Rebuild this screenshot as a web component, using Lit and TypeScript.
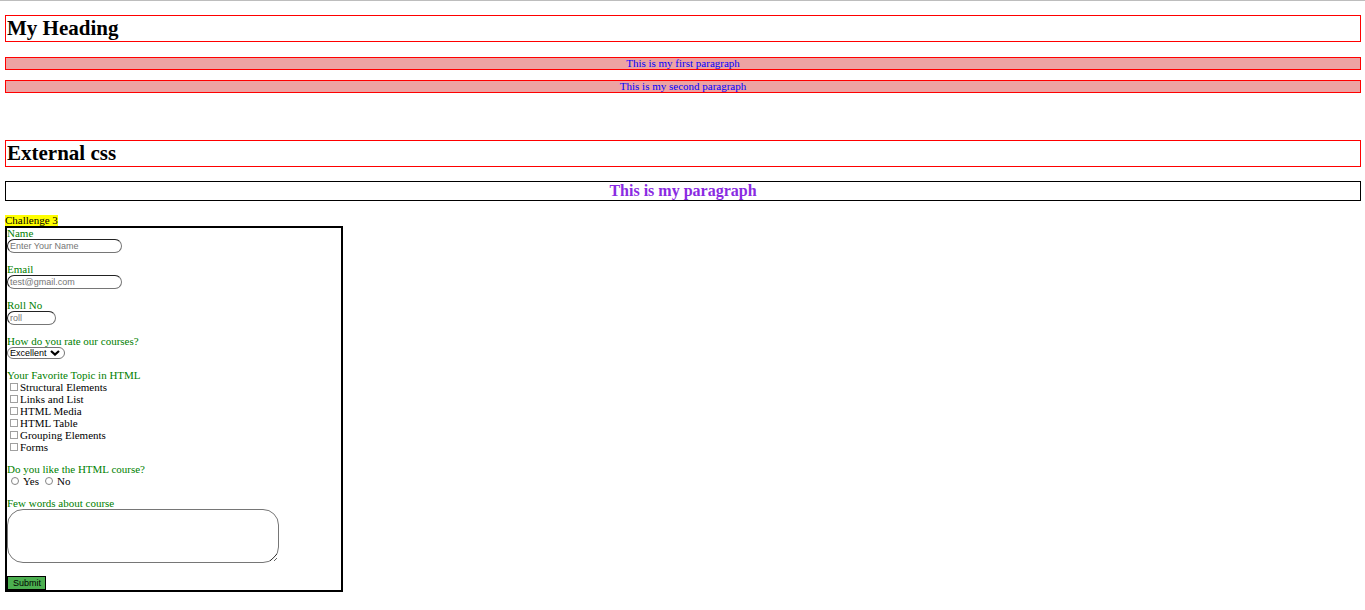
import { LitElement, html, css } from "lit";
import { customElement } from "lit/decorators.js";

const TOPICS = [
  "Structural Elements",
  "Links and List",
  "HTML Media",
  "HTML Table",
  "Grouping Elements",
  "Forms",
];

@customElement("app-root")
export class AppRoot extends LitElement {
  static styles = css`
    :host {
      display: block;
      border-top: 1px solid #bdbdbd;
      background: #fff;
      color: #000;
      font: 11px/12px "Liberation Serif", "Times New Roman", serif;
    }
    main {
      padding: 14px 4px 18px 5px;
    }
    h1 {
      margin: 0;
      padding: 0 1px;
      border: 1px solid #f00;
      font-size: 21px;
      line-height: 25px;
      font-weight: bold;
    }
    .note {
      margin: 10px 0 0;
      border: 1px solid #f00;
      background: #eda3a3;
      color: #00f;
      line-height: 11px;
      text-align: center;
    }
    .first {
      margin-top: 15px;
    }
    .external {
      margin-top: 47px;
    }
    .styled {
      margin: 14px 0;
      border: 1px solid #000;
      color: #8a2be2;
      font-size: 16px;
      line-height: 18px;
      font-weight: bold;
      text-align: center;
    }
    .challenge {
      display: flex;
      line-height: 11px;
    }
    mark {
      background: #ff0;
      color: #000;
    }
    form {
      display: flex;
      flex-direction: column;
      gap: 11px;
      box-sizing: border-box;
      width: 338px;
      max-width: 100%;
      border: 2px solid #000;
    }
    .field {
      display: flex;
      flex-direction: column;
      align-items: flex-start;
      min-width: 0;
      margin: 0;
      padding: 0;
      border: 0;
    }
    .caption {
      padding: 0;
      color: #008000;
      line-height: 11px;
    }
    .text,
    select,
    textarea,
    button {
      box-sizing: border-box;
      margin: 0;
      font: 9px/10px "Liberation Sans", Arial, sans-serif;
    }
    .text {
      width: 115px;
      height: 14px;
      padding: 1px 2px;
      border: 1px solid #767676;
      border-top-color: #222;
      border-left-color: #222;
      border-radius: 7px;
      background: #fff;
    }
    .text::placeholder {
      color: #757575;
    }
    .roll {
      width: 49px;
    }
    .select {
      display: grid;
      align-items: center;
    }
    .select > * {
      grid-area: 1 / 1;
    }
    select {
      appearance: none;
      width: 58px;
      height: 12px;
      padding: 0 2px;
      border: 1px solid #767676;
      border-radius: 6px;
      background: #fff;
      color: #000;
    }
    .chevron {
      justify-self: end;
      width: 10px;
      height: 6px;
      margin-right: 5px;
      pointer-events: none;
    }
    .option {
      display: flex;
      align-items: center;
      height: 12px;
    }
    .option input {
      appearance: none;
      box-sizing: border-box;
      width: 8px;
      height: 8px;
      margin: 0 2px 0 3px;
      border: 1px solid #a0a0a0;
      background: #fff;
    }
    .option input:checked {
      background: #0075ff;
    }
    .choices {
      display: flex;
      gap: 2px;
    }
    .choices .option input {
      margin: 0 4px;
      border-color: #858585;
      border-radius: 50%;
    }
    textarea {
      width: 272px;
      max-width: 100%;
      height: 54px;
      padding: 2px;
      border: 1px solid #767676;
      border-radius: 16px;
      background: #fff;
    }
    button {
      align-self: flex-start;
      height: 14px;
      margin-top: 2px;
      padding: 0 4px 0 5px;
      border: 1px solid #000;
      background: #4caf50;
      color: #000;
    }
  `;

  render() {
    return html`
      <main>
        <h1>My Heading</h1>
        <p class="note first">This is my first paragraph</p>
        <p class="note">This is my second paragraph</p>
        <h1 class="external">External css</h1>
        <p class="styled">This is my paragraph</p>
        <div class="challenge"><mark>Challenge 3</mark></div>
        <form @submit=${(e: Event) => e.preventDefault()}>
          <div class="field">
            <label class="caption" for="name">Name</label>
            <input class="text" id="name" type="text" placeholder="Enter Your Name" />
          </div>
          <div class="field">
            <label class="caption" for="email">Email</label>
            <input class="text" id="email" type="email" placeholder="test@gmail.com" />
          </div>
          <div class="field">
            <label class="caption" for="roll">Roll No</label>
            <input class="text roll" id="roll" type="text" placeholder="roll" />
          </div>
          <div class="field">
            <label class="caption" for="rate">How do you rate our courses?</label>
            <div class="select">
              <select id="rate">
                <option>Excellent</option>
                <option>Good</option>
                <option>Average</option>
              </select>
              <svg class="chevron" viewBox="0 0 10 6" aria-hidden="true">
                <path d="M1 1 L5 4.6 L9 1" fill="none" stroke="#000" stroke-width="2.2" />
              </svg>
            </div>
          </div>
          <fieldset class="field">
            <legend class="caption">Your Favorite Topic in HTML</legend>
            ${TOPICS.map(
              (t) => html`<label class="option"><input type="checkbox" name="topic" .value=${t} />${t}</label>`
            )}
          </fieldset>
          <fieldset class="field">
            <legend class="caption">Do you like the HTML course?</legend>
            <div class="choices">
              <label class="option"><input type="radio" name="like" value="yes" />Yes</label>
              <label class="option"><input type="radio" name="like" value="no" />No</label>
            </div>
          </fieldset>
          <div class="field">
            <label class="caption" for="words">Few words about course</label>
            <textarea id="words"></textarea>
          </div>
          <button type="submit">Submit</button>
        </form>
      </main>
    `;
  }
}
